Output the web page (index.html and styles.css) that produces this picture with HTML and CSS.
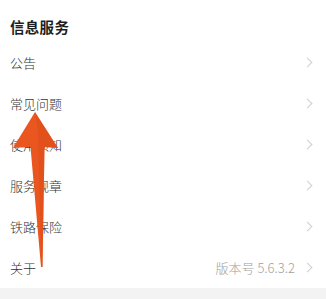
FILE: index.html
```html
<!DOCTYPE html>
<html lang="zh-CN">
<head>
  <meta charset="UTF-8" />
  <meta name="viewport" content="width=device-width, initial-scale=1" />
  <title>信息服务</title>
  <link rel="stylesheet" href="styles.css">
</head>
<body>
  <div class="panel">
    <h2 class="panel-title">信息服务</h2>

    <ul class="menu">
      <li class="menu-item"><span class="menu-label">公告</span><span class="chev"></span></li>
      <li class="menu-item"><span class="menu-label">常见问题</span><span class="chev"></span></li>
      <li class="menu-item"><span class="menu-label">使用须知</span><span class="chev"></span></li>
      <li class="menu-item"><span class="menu-label">服务规章</span><span class="chev"></span></li>
      <li class="menu-item"><span class="menu-label">铁路保险</span><span class="chev"></span></li>
      <li class="menu-item">
        <span class="menu-label">关于</span>
        <span class="menu-extra">版本号 5.6.3.2</span>
        <span class="chev"></span>
      </li>
    </ul>

    <!-- annotation arrow over the list -->
    <svg class="arrow" width="70" height="170" viewBox="0 0 70 170">
      <polygon points="35,0 58,36 44.5,35 42.5,155 41,155 30.5,35 13,36" fill="#e9561f" />
      <polygon points="35,0 58,36 44.5,35 42.5,155 41.5,155 38,20" fill="#dc4b17" opacity="0.5" />
    </svg>
  </div>
  <div class="footer-band"></div>
</body>
</html>
```

FILE: styles.css
```css
body {
  margin: 0;
  background-color: #fff;
  font-family: "Noto Sans CJK SC", "Noto Sans", sans-serif;
}

.panel {
  position: relative;
}

.panel-title {
  margin: 0;
  height: 42px;
  padding: 0 10px;
  box-sizing: border-box;
  padding-top: 16px;
  font-size: 14.5px;
  line-height: 22px;
  font-weight: bold;
  letter-spacing: 0.3px;
  color: #1e1e1e;
}

.menu {
  list-style: none;
  margin: 0;
  padding: 0;
}

.menu-item {
  display: flex;
  align-items: center;
  height: 41px;
  padding: 0 15px 0 10px;
  font-size: 13px;
  font-weight: 300;
  color: #333;
}

.menu-label {
  flex: 1;
}

.menu-extra {
  color: #a0a0a0;
  margin-right: 9px;
}

.chev {
  width: 6px;
  height: 6px;
  border-top: 1px solid #cfcfcf;
  border-right: 1px solid #cfcfcf;
  transform: rotate(45deg);
}

.arrow {
  position: absolute;
  left: 0;
  top: 112px;
}

.footer-band {
  height: 11px;
  background-color: #f3f3f3;
}
```
